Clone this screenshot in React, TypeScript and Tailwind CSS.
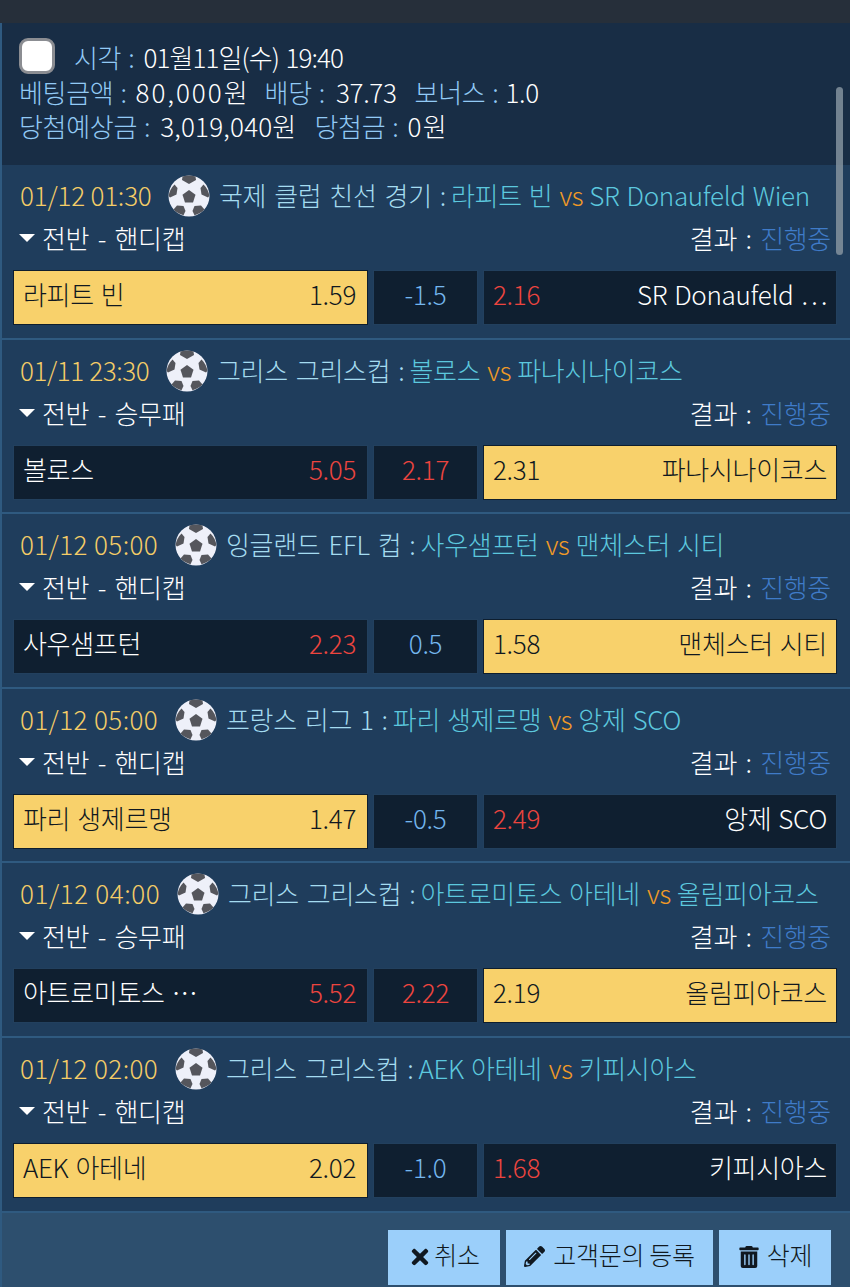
import { FaTimes, FaPencilAlt, FaTrashAlt } from 'react-icons/fa'

const bets = [
  { time: '01/12 01:30', timeClass: 'w-[131px] tracking-[-0.2px]', league: '국제 클럽 친선 경기', home: '라피트 빈', away: 'SR Donaufeld Wien', market: '전반 - 핸디캡', homeName: '라피트 빈', homeOdds: '1.59', mid: '-1.5', midRed: false, awayName: 'SR Donaufeld ⋯', awayOdds: '2.16', pick: 'home' },
  { time: '01/11 23:30', timeClass: 'w-[129px] tracking-[-0.4px]', league: '그리스 그리스컵', home: '볼로스', away: '파나시나이코스', market: '전반 - 승무패', homeName: '볼로스', homeOdds: '5.05', mid: '2.17', midRed: true, awayName: '파나시나이코스', awayOdds: '2.31', pick: 'away' },
  { time: '01/12 05:00', timeClass: 'w-[138px] tracking-[0.4px]', league: '잉글랜드 EFL 컵', home: '사우샘프턴', away: '맨체스터 시티', market: '전반 - 핸디캡', homeName: '사우샘프턴', homeOdds: '2.23', mid: '0.5', midRed: false, awayName: '맨체스터 시티', awayOdds: '1.58', pick: 'away' },
  { time: '01/12 05:00', timeClass: 'w-[138px] tracking-[0.4px]', league: '프랑스 리그 1', home: '파리 생제르맹', away: '앙제 SCO', market: '전반 - 핸디캡', homeName: '파리 생제르맹', homeOdds: '1.47', mid: '-0.5', midRed: false, awayName: '앙제 SCO', awayOdds: '2.49', pick: 'home' },
  { time: '01/12 04:00', timeClass: 'w-[140px] tracking-[0.6px]', league: '그리스 그리스컵', home: '아트로미토스 아테네', away: '올림피아코스', market: '전반 - 승무패', homeName: '아트로미토스 ⋯', homeOdds: '5.52', mid: '2.22', midRed: true, awayName: '올림피아코스', awayOdds: '2.19', pick: 'away' },
  { time: '01/12 02:00', timeClass: 'w-[138px] tracking-[0.4px]', league: '그리스 그리스컵', home: 'AEK 아테네', away: '키피시아스', market: '전반 - 핸디캡', homeName: 'AEK 아테네', homeOdds: '2.02', mid: '-1.0', midRed: false, awayName: '키피시아스', awayOdds: '1.68', pick: 'home' },
]

function Ball() {
  return (
    <svg viewBox="0 0 42 42" className="w-[42px] h-[42px] shrink-0 block">
      <circle cx="21" cy="21" r="20.5" fill="#eef0f9" />
      <g fill="#55565c">
        <path d="M21 15l6.500 4.700-2.500 7.800h-8l-2.500-7.800z" />
        <path d="M14.500 1.600a20.500 20.500 0 0 1 13 0l.5 3.400-7 4-7-4z" />
        <path d="M6.500 9.500l3 3.500-1 6.500-6.500 3-1.400-1.500a20.500 20.500 0 0 1 5.900-11.500z" />
        <path d="M35.500 9.500l-3 3.500 1 6.500 6.500 3 1.400-1.500a20.500 20.500 0 0 0-5.900-11.500z" />
        <path d="M9 30.500l6.500.5 2 5-2 4.200a20.500 20.500 0 0 1-10-5.700z" />
        <path d="M33 30.500l-6.500.5-2 5 2 4.200a20.500 20.500 0 0 0 10-5.700z" />
      </g>
    </svg>
  )
}

function Box({ active, children, className }: { active: boolean; children: React.ReactNode; className: string }) {
  return (
    <div className={`h-[55px] flex items-center justify-between px-[9px] pb-[7px] border ${active ? 'bg-[#f8d16b] border-[#0e1e2e] text-[#101820]' : 'bg-[#0f1f30] border-[#22405e] text-white'} ${className}`}>
      {children}
    </div>
  )
}

export default function App() {
  return (
    <div className="w-[850px] h-[1287px] relative overflow-hidden bg-[#1f3d5c] text-[26px] leading-[34px] tracking-[-0.3px] [word-spacing:1.5px] font-light text-white font-['Noto_Sans_CJK_KR','Noto_Sans',sans-serif]">
      <div className="h-[23px] bg-[#262f3a]" />

      <div className="border-l-2 border-[#2f5a80]">
        {/* Summary */}
        <div className="h-[142px] bg-[#182d45] pl-[17px] pt-[15px]">
          <div className="flex items-center h-[37px]">
            <div className="w-[36px] h-[36px] rounded-[9px] bg-white border-[3px] border-[#8b8d92] mb-[1px]" />
            <span className="ml-[19px] text-[#92caf5]">시각 :</span>
            <span className="ml-[9px] tracking-[-0.9px]">01월11일(수) 19:40</span>
          </div>
          <div className="h-[34px] whitespace-nowrap">
            <span className="text-[#92caf5]">베팅금액 : </span>
            <span className="ml-[2px] tracking-[2px]">80,000원</span>
            <span className="ml-[15px] text-[#92caf5]">배당 : </span>
            <span className="ml-[4px]">37.73</span>
            <span className="ml-[18px] text-[#92caf5]">보너스 : </span>
            <span>1.0</span>
          </div>
          <div className="h-[34px] whitespace-nowrap">
            <span className="text-[#92caf5]">당첨예상금 : </span>
            <span className="ml-[3px] tracking-[0.2px]">3,019,040원</span>
            <span className="ml-[18px] text-[#92caf5]">당첨금 : </span>
            <span className="ml-[2px] tracking-[1.5px]">0원</span>
          </div>
        </div>

        {/* Bets */}
        {bets.map((b, i) => (
          <div key={i} className="h-[174.6px] border-b-2 border-[#2f5a80] px-[11px] pt-[10px]">
            <div className="flex items-center h-[42px] pl-[7px]">
              <span className={`text-[#f5cd67] pb-[2px] whitespace-nowrap [word-spacing:0] ${b.timeClass}`}>{b.time}</span>
              <span className="ml-[17px]"><Ball /></span>
              <span className="ml-[9px] pb-[2px] text-[#a5dcf0] whitespace-nowrap [word-spacing:2.5px]">{b.league} : </span>
              <span className="ml-[5px] pb-[2px] text-[#5cc8de] whitespace-nowrap">{b.home}</span>
              <span className="ml-[7px] pb-[2px] text-[#f09a26]">vs</span>
              <span className="ml-[6px] pb-[2px] text-[#5cc8de] whitespace-nowrap">{b.away}</span>
            </div>
            <div className="flex items-center justify-between h-[44px] pl-[6px] pr-[8px] pb-[2px] [word-spacing:3px]">
              <div className="flex items-center">
                <span className="w-0 h-0 border-x-[8px] border-x-transparent border-t-[8px] border-t-white mr-[7px]" />
                <span>{b.market}</span>
              </div>
              <div>
                <span>결과 : </span>
                <span className="text-[#3f7bc8]">진행중</span>
              </div>
            </div>
            <div className="flex gap-[5px] mt-[9px]">
              <Box active={b.pick === 'home'} className="w-[355px]">
                <span>{b.homeName}</span>
                <span className={`mr-[2px] ${b.pick === 'home' ? '' : 'text-[#ec453f]'}`}>{b.homeOdds}</span>
              </Box>
              <div className={`w-[105px] h-[55px] pb-[7px] flex items-center justify-center bg-[#0f1f30] border border-[#22405e] ${b.midRed ? 'text-[#ec453f]' : 'text-[#74b6ee]'}`}>
                {b.mid}
              </div>
              <Box active={b.pick === 'away'} className="w-[354px]">
                <span className={b.pick === 'away' ? '' : 'text-[#ec453f]'}>{b.awayOdds}</span>
                <span>{b.awayName}</span>
              </Box>
            </div>
          </div>
        ))}

        {/* Actions */}
        <div className="h-[76px] bg-[#2d4f6e] flex justify-end gap-[6px] pt-[17px] pr-[19px] [word-spacing:0]">
          <button className="w-[112px] h-[55px] pb-[7px] bg-[#9bcffa] text-[#101820] flex items-center justify-center gap-[2px] text-[25px]">
            <FaTimes size={24} className="mt-[6px]" /> 취소
          </button>
          <button className="w-[207px] h-[55px] pb-[7px] bg-[#9bcffa] text-[#101820] flex items-center justify-center gap-[8px] text-[25px]">
            <FaPencilAlt size={21} className="mt-[6px]" /> 고객문의 등록
          </button>
          <button className="w-[112px] h-[55px] pb-[7px] bg-[#9bcffa] text-[#101820] flex items-center justify-center gap-[7px] text-[25px]">
            <FaTrashAlt size={22} className="mt-[6px]" /> 삭제
          </button>
        </div>
      </div>

      {/* overlay scrollbar */}
      <div className="absolute left-[836px] top-[87px] w-[7px] h-[168px] rounded-full bg-[#8a97a3]/80" />
    </div>
  )
}
